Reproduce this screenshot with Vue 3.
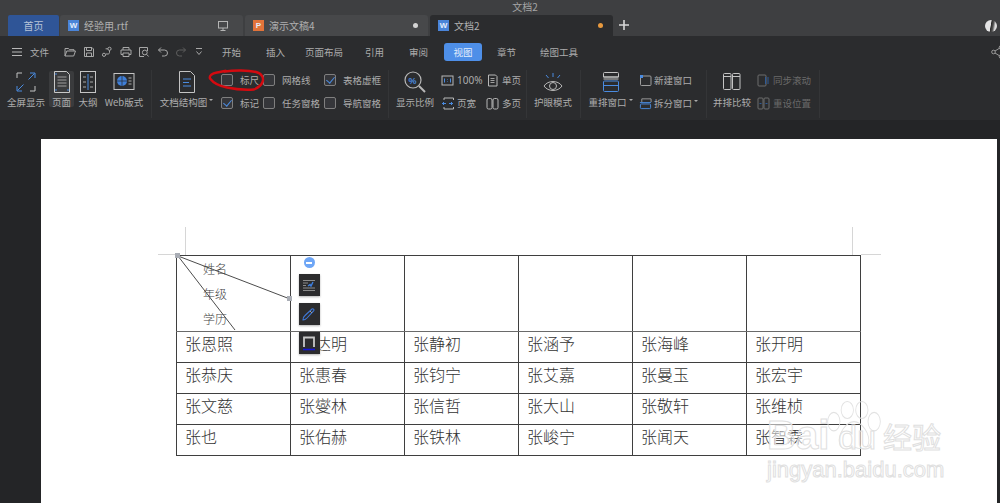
<script setup>
const tabs = [
  { name: '经验用.rtf', kind: 'w', trail: 'screen' },
  { name: '演示文稿4', kind: 'p', trail: 'dot' },
]
const menus = ['开始', '插入', '页面布局', '引用', '审阅', '视图', '章节', '绘图工具']
const rows = [
  ['张恩照', '张达明', '张静初', '张涵予', '张海峰', '张开明'],
  ['张恭庆', '张惠春', '张钧宁', '张艾嘉', '张曼玉', '张宏宇'],
  ['张文慈', '张燮林', '张信哲', '张大山', '张敬轩', '张维桢'],
  ['张也', '张佑赫', '张铁林', '张峻宁', '张闻天', '张智霖'],
]
</script>

<template>
  <div class="app">
    <div class="title">文档2</div>
    <div class="tabstrip">
      <div class="home">首页</div>
      <div v-for="t in tabs" :key="t.name" class="tab">
        <span class="fileicon" :class="t.kind">{{ t.kind === 'w' ? 'W' : 'P' }}</span>
        <span class="tabname">{{ t.name }}</span>
        <svg v-if="t.trail === 'screen'" class="trail" width="12" height="12" viewBox="0 0 12 12" fill="none" stroke="#b4b4b4"><rect x="1.5" y="1.5" width="9" height="6.5"/><path d="M6 8v2.5M3.5 10.5h5"/></svg>
        <i v-else class="dot white"></i>
      </div>
      <div class="tab active">
        <span class="fileicon w">W</span>
        <span class="tabname">文档2</span>
        <i class="dot orange"></i>
      </div>
      <svg class="plus" width="12" height="12" viewBox="0 0 12 12"><path d="M6 1v10M1 6h10" stroke="#d8d8d8" stroke-width="1.6"/></svg>
      <div class="avatar"></div>
    </div>

    <div class="menubar">
      <svg class="burger" width="12" height="10" viewBox="0 0 12 10"><path d="M1 1.5h10M1 5h10M1 8.5h10" stroke="#b8b8b8"/></svg>
      <span class="filemenu">文件</span>
      <div class="quick">
        <svg width="12" height="12" viewBox="0 0 12 12"><path d="M1 10V2.5h3.5l1 1.2H10V5M1 10l1.8-5H11.5L9.7 10Z"/></svg>
        <svg width="12" height="12" viewBox="0 0 12 12"><path d="M1.5 1.5h7.5l1.5 1.5v7.5h-9ZM3.5 1.5v3h5v-3M3.5 10.5V7h5v3.5"/></svg>
        <svg width="12" height="12" viewBox="0 0 12 12"><circle cx="3" cy="8.8" r="1.6"/><circle cx="8.5" cy="2.8" r="1.6"/><path d="M4.6 2.8h2.3M8.5 4.5v2c0 1-.7 1.5-1.5 1.5H5"/></svg>
        <svg width="12" height="12" viewBox="0 0 12 12"><path d="M3 4V1.5h6V4M3 8.5H1V4h10v4.5H9M3 7h6v3.5H3Z"/></svg>
        <svg width="12" height="12" viewBox="0 0 12 12"><path d="M9.5 5V1.5h-8v9H6"/><circle cx="6.8" cy="6.5" r="2.4"/><path d="M8.6 8.3l2 2.2"/></svg>
        <svg width="12" height="12" viewBox="0 0 12 12"><path d="M4 1.5L1.5 4 4 6.5M1.5 4H7.5a2.8 2.8 0 0 1 0 6H5"/></svg>
        <svg class="off" width="12" height="12" viewBox="0 0 12 12"><path d="M8 1.5L10.5 4 8 6.5M10.5 4H4.5a2.8 2.8 0 0 0 0 6H7"/></svg>
        <svg width="10" height="12" viewBox="0 0 10 12"><path d="M2 2.5h6M2.5 5.5l2.5 3 2.5-3"/></svg>
      </div>
      <nav class="menus">
        <span v-for="m in menus" :key="m" class="menu" :class="{ on: m === '视图' }">{{ m }}</span>
      </nav>
      <svg class="share" width="12" height="14" viewBox="0 0 12 14" fill="none" stroke="#9a9a9a"><circle cx="2.5" cy="7" r="1.8"/><circle cx="10" cy="2.5" r="1.8"/><circle cx="10" cy="11.5" r="1.8"/><path d="M4 6l4.5-2.800M4 8l4.5 2.800"/></svg>
    </div>

    <div class="ribbon">
      <section class="group g1">
        <div class="big w38">
          <svg width="24" height="24" viewBox="0 0 24 24" fill="none"><path d="M3 8V3h5M16 21h5v-5" stroke="#c4c4c4"/><path d="M21 8V3h-5M3 16v5h5M20.5 3.5l-6 6M3.5 20.5l6-6" stroke="#4a8be0"/></svg>
          <span>全屏显示</span>
        </div>
        <div class="big page">
          <svg width="22" height="24" viewBox="0 0 22 24" fill="none"><path d="M3.5 1.5h12l3 3v18h-15Z" stroke="#c8c8c8" fill="#3a3b3d"/><path d="M6.5 7h9M6.5 10h9M6.5 13h9M6.5 16h9" stroke="#9f9f9f"/><path d="M4 4h2M16 20h2M4 20h2" stroke="#4a8be0"/></svg>
          <span>页面</span>
        </div>
        <div class="big w28">
          <svg width="20" height="24" viewBox="0 0 20 24" fill="none"><rect x="2.5" y="1.5" width="15" height="21" stroke="#c4c4c4"/><path d="M10 4v16" stroke="#4a8be0"/><path d="M5 7h3M12 7h3M5 12h3M12 12h3M5 17h3M12 17h3" stroke="#a8a8a8"/></svg>
          <span>大纲</span>
        </div>
        <div class="big w38">
          <svg width="24" height="24" viewBox="0 0 24 24" fill="none"><rect x="2" y="3.5" width="20" height="16" stroke="#c4c4c4"/><circle cx="10" cy="11" r="5" fill="#3f7fd8"/><path d="M5 11h10M10 6v10" stroke="#25282c" stroke-width=".7"/><path d="M16.5 8h3M16.5 11h3M16.5 14h3" stroke="#a8a8a8"/></svg>
          <span>Web版式</span>
        </div>
      </section>

      <section class="group g2">
        <div class="big w53">
          <svg width="20" height="24" viewBox="0 0 20 24" fill="none"><path d="M2.5 1.5h11l4 4v17h-15Z" stroke="#c4c4c4"/><path d="M6 9h8M6 12.5h6M6 16h8" stroke="#4a8be0"/></svg>
          <span>文档结构图<i class="caret"></i></span>
        </div>
        <div class="checks">
          <label class="chk"><i class="box"></i><span>标尺</span></label>
          <label class="chk"><i class="box"></i><span>网格线</span></label>
          <label class="chk"><i class="box on"></i><span>表格虚框</span></label>
          <label class="chk"><i class="box on"></i><span>标记</span></label>
          <label class="chk"><i class="box"></i><span>任务窗格</span></label>
          <label class="chk"><i class="box"></i><span>导航窗格</span></label>
        </div>
      </section>

      <section class="group g3">
        <div class="big w38">
          <svg width="24" height="24" viewBox="0 0 24 24" fill="none"><circle cx="10" cy="10" r="8" stroke="#b8b8b8" stroke-width="1.2"/><path d="M16 16l6 6" stroke="#b8b8b8" stroke-width="2"/><text x="5.5" y="13.5" font-size="9" font-family="Liberation Sans" font-weight="700" fill="#4a8be0">%</text></svg>
          <span>显示比例</span>
        </div>
        <div class="pairs">
          <div class="small">
            <svg width="13" height="13" viewBox="0 0 13 13" fill="none"><rect x="1" y="2" width="11" height="9" stroke="#b8b8b8"/><path d="M3.5 4.5v4M9.5 4.5v4M6.5 5v.5M6.5 7.5v.5" stroke="#4a8be0"/></svg>
            <span class="t100">100%</span>
          </div>
          <div class="small">
            <svg width="13" height="13" viewBox="0 0 13 13" fill="none"><path d="M3 3V1h9.500v2M3 10v2h9.500v-2" stroke="#b8b8b8"/><path d="M1 6.5h4M8 6.5h4M3 5l-1.5 1.5L3 8M10 5l1.5 1.5L10 8" stroke="#4a8be0"/></svg>
            <span>页宽</span>
          </div>
          <div class="small">
            <svg width="13" height="13" viewBox="0 0 13 13" fill="none"><path d="M2.5 1h7l1.5 1.5V12h-8.500Z" stroke="#b8b8b8"/><path d="M4.5 4.5h4M4.5 6.5h4M4.5 8.5h4" stroke="#a0a0a0"/></svg>
            <span>单页</span>
          </div>
          <div class="small">
            <svg width="13" height="13" viewBox="0 0 13 13" fill="none"><rect x="1" y="1.5" width="5" height="10.5" rx="1.5" stroke="#b8b8b8"/><rect x="7" y="1.5" width="5" height="10.5" rx="1.5" stroke="#b8b8b8"/></svg>
            <span>多页</span>
          </div>
        </div>
      </section>

      <section class="group g4">
        <div class="big w38">
          <svg width="24" height="24" viewBox="0 0 24 24" fill="none"><path d="M3 16c4-6 14-6 18 0-4 6-14 6-18 0Z" stroke="#b8b8b8"/><circle cx="12" cy="16" r="3.5" stroke="#b8b8b8"/><path d="M12 3v4M5 5l2.5 3M19 5l-2.5 3" stroke="#4a8be0"/></svg>
          <span>护眼模式</span>
        </div>
      </section>

      <section class="group g5">
        <div class="big w45">
          <svg width="24" height="24" viewBox="0 0 24 24" fill="none"><path d="M4.5 7V3.5a1 1 0 0 1 1-1h13a1 1 0 0 1 1 1V7ZM4.5 7h15" stroke="#c4c4c4"/><rect x="4.5" y="11" width="15" height="10.5" rx="1" stroke="#4a8be0"/><path d="M4.5 15.5h15" stroke="#4a8be0"/><path d="M4.5 9h15" stroke="#c4c4c4"/></svg>
          <span>重排窗口<i class="caret"></i></span>
        </div>
        <div class="col">
          <div class="small">
            <svg width="13" height="13" viewBox="0 0 13 13" fill="none"><rect x="1.5" y="2" width="10.5" height="9.5" rx="1" stroke="#9e9e9e"/><rect x="1" y="1" width="3" height="3" fill="#4a8be0"/></svg>
            <span>新建窗口</span>
          </div>
          <div class="small">
            <svg width="13" height="13" viewBox="0 0 14 13" fill="none"><path d="M3 5V1.5h10V5" stroke="#9e9e9e"/><rect x="1.5" y="7" width="11" height="5" rx="1" stroke="#4a8be0"/><path d="M1 5.5h12" stroke="#4a8be0"/></svg>
            <span>拆分窗口<i class="caret"></i></span>
          </div>
        </div>
      </section>

      <section class="group g6">
        <div class="big w38">
          <svg width="20" height="24" viewBox="0 0 20 24" fill="none"><rect x="1.5" y="3.5" width="7.5" height="16" rx="1" stroke="#c4c4c4"/><rect x="10.5" y="3.5" width="7.5" height="16" rx="1" stroke="#c4c4c4"/><path d="M1.5 6.5h7.5M10.500 6.5h7.500" stroke="#c4c4c4"/></svg>
          <span>并排比较</span>
        </div>
        <div class="col dim">
          <div class="small">
            <svg width="13" height="13" viewBox="0 0 13 13" fill="none"><rect x="1" y="1" width="8" height="11" rx="1" stroke="#6d6d6d"/><path d="M8.5 3v7M11 3v7" stroke="#2f5b97"/></svg>
            <span>同步滚动</span>
          </div>
          <div class="small">
            <svg width="13" height="13" viewBox="0 0 13 13" fill="none"><rect x="1" y="1" width="5" height="11" rx="1" stroke="#6d6d6d"/><rect x="7" y="1" width="5" height="11" rx="1" stroke="#6d6d6d"/><path d="M2.5 6.5h2M8.5 6.5h2" stroke="#2f5b97"/></svg>
            <span>重设位置</span>
          </div>
        </div>
      </section>
    </div>

    <main class="workspace">
      <div class="paper">
        <div class="sheet">
          <i class="guide v left"></i>
          <i class="guide v right"></i>
          <i class="guide h hl"></i>
          <i class="guide h hr"></i>

          <table class="grid">
            <tbody>
              <tr class="head">
                <td class="slant">
                  <svg class="diag" width="116" height="76" viewBox="0 0 116 76"><path d="M1 0L113 43M1 0L58 74" stroke="#4c4c4c" fill="none"/></svg>
                  <i class="handle h1"></i>
                  <i class="handle h2"></i>
                  <span class="sl">姓名</span>
                  <span class="sl">年级</span>
                  <span class="sl">学历</span>
                </td>
                <td class="tools">
                  <div class="float">
                    <span class="minus"></span>
                    <span class="fbtn">
                      <svg width="14" height="14" viewBox="0 0 14 14" fill="none"><path d="M1 2.5h12M1 5h5M1 7.5h3M1 10h12M1 12.5h12" stroke="#8b8b8b"/><path d="M6 8l2-1.5 1 1.5 2-4" stroke="#3d7fe0" stroke-width="1.4"/></svg>
                    </span>
                    <span class="fbtn">
                      <svg width="16" height="16" viewBox="0 0 16 16" fill="none"><path d="M2 14c-.4-2 .8-3.500 2-4.500L11 3c1-.8 2.500.5 1.800 1.600L6 12c-1.200 1.300-2.500 2-4 2Z" stroke="#3f78d8" stroke-width="1.1"/><path d="M9 5l2 2" stroke="#9a9a9a"/></svg>
                    </span>
                    <span class="fbtn">
                      <svg width="16" height="16" viewBox="0 0 16 16" fill="none"><path d="M3 12V2.5h10V12" stroke="#c8c8c8" stroke-width="1.8"/><path d="M2 14.5h12" stroke="#1616d8" stroke-width="1.6"/></svg>
                    </span>
                  </div>
                </td>
                <td v-for="n in 4" :key="n"></td>
              </tr>
              <tr v-for="row in rows" :key="row[0]">
                <td v-for="c in row" :key="c">{{ c }}</td>
              </tr>
            </tbody>
          </table>

          <div class="watermark">
            <svg class="paw" width="56" height="54" viewBox="0 0 100 70" preserveAspectRatio="none" fill="none" stroke="#e2e2e2" stroke-width="1.5"><ellipse cx="14" cy="28" rx="11" ry="12"/><ellipse cx="38" cy="13" rx="11" ry="11"/><ellipse cx="64" cy="13" rx="11" ry="11"/><ellipse cx="86" cy="28" rx="11" ry="12"/><path d="M50 28c-14 0-29 16-26 28 2 9 16 8 26 5 10 3 24 4 26-5 3-12-12-28-26-28Z"/></svg>
            <div class="wm-top"><span class="wm-bai">Bai</span><span class="wm-du">du</span><span class="wm-cn">经验</span></div>
            <div class="wm-url">jingyan.baidu.com</div>
          </div>
        </div>
      </div>
    </main>

    <svg class="ring" width="62" height="26" viewBox="0 0 62 26" fill="none"><path d="M19 3.5C28 2 42 2 50 4c6 1.5 8 6 6.5 10-1 3-3 5-8.5 7.5-9 .5-18 0-27-2-8-1.500-14-5-17-9-1-3 2-5 7-6 3-.5 5-1 8-1.500Z" stroke="#d40a10" stroke-width="2.4"/></svg>
  </div>
</template>

<style scoped>
.app {
  position: relative;
  width: 1000px;
  height: 503px;
  overflow: hidden;
  background: #242527;
  font-family: "Noto Sans CJK SC", "Noto Sans", sans-serif;
  color: #adadad;
  font-size: 9.5px;
}
.title {
  height: 13px;
  line-height: 13px;
  background: #3e3f41;
  text-align: center;
  font-size: 10px;
  color: #a5a5a5;
  padding-left: 50px;
}
.tabstrip {
  height: 23px;
  background: #3e3f41;
  display: flex;
  align-items: flex-end;
  padding-left: 8px;
  gap: 1px;
}
.home {
  width: 51px;
  height: 21px;
  line-height: 21px;
  background: #2f5597;
  text-align: center;
  border-radius: 2px 2px 0 0;
  color: #b8c4d8;
  font-size: 10px;
}
.tab {
  width: 183px;
  height: 21px;
  background: #47484a;
  display: flex;
  align-items: center;
  padding: 0 10px 0 8px;
  box-sizing: border-box;
  border-radius: 3px 3px 0 0;
  margin-right: 1px;
  font-size: 10px;
}
.tab.active { background: #2b2c2e; }
.fileicon {
  width: 11px;
  height: 11px;
  font: 700 8px/11px "Liberation Sans", sans-serif;
  text-align: center;
  color: #e4edfb;
  margin-right: 5px;
  flex: none;
}
.fileicon.w { background: #4a84d8; }
.fileicon.p { background: #e2733a; }
.tabname { flex: 1; color: #b0b0b0; }
.dot { width: 5px; height: 5px; border-radius: 50%; }
.dot.white { background: #d4d4d4; }
.dot.orange { background: #e8993e; }
.trail { margin-right: 4px; }
.plus { margin: 0 0 5px 3px; }
.avatar {
  width: 12px;
  height: 12px;
  border-radius: 50%;
  margin: 0 3px 4px auto;
  background: linear-gradient(100deg, #e4e4e4 45%, #2a2a2a 50%, #555 65%, #ddd 80%);
}
.menubar {
  height: 32px;
  background: #2b2c2e;
  display: flex;
  align-items: center;
  padding-left: 11px;
  position: relative;
}
.filemenu { margin-left: 7px; width: 22px; }
.quick { display: flex; gap: 6.5px; margin-left: 12px; align-items: center; width: 158px; }
.quick svg { fill: none; stroke: #a8a8a8; flex: none; }
.quick svg.off { stroke: #5e5e5e; }
.menus { display: flex; align-items: center; }
.menu { height: 18px; line-height: 18px; white-space: nowrap; border-radius: 3px; }
.menu:nth-child(2) { margin-left: 25px; }
.menu:nth-child(3) { margin-left: 20px; }
.menu:nth-child(4) { margin-left: 22px; }
.menu:nth-child(5) { margin-left: 25px; }
.menu:nth-child(6) { margin-left: 16px; }
.menu:nth-child(7) { margin-left: 15px; }
.menu:nth-child(8) { margin-left: 24px; }
.menu.on { background: #4e8fe8; color: #e4eefc; padding: 0 9.5px; }
.share { position: absolute; right: -3px; top: 9px; }
.ribbon {
  height: 52px;
  background: #2b2c2e;
  display: flex;
  align-items: flex-start;
  padding-left: 7px;
}
.group {
  display: flex;
  align-items: stretch;
  gap: 4px;
  border-right: 1px solid #343537;
  padding-right: 8px;
  margin: 2px 7px 0 0;
  height: 48px;
}
.big {
  display: flex;
  flex-direction: column;
  align-items: center;
  flex: none;
  white-space: nowrap;
  gap: 1px;
}
.big svg { height: 24px; flex: none; }
.big span { line-height: 14px; }
.w38 { width: 38px; }
.w28 { width: 24px; margin: 0 1px 0 -2px; }
.w45 { width: 45px; }
.w53 { width: 53px; }
.page { width: 25px; background: #3a3b3d; border-radius: 2px; height: 36px; margin-top: 1px; }
.page svg { margin-top: -1px; }
.caret {
  display: inline-block;
  width: 0;
  height: 0;
  border: 2px solid transparent;
  border-top: 2.5px solid #aaa;
  margin-left: 2px;
  vertical-align: 3px;
}
.g1 { margin-right: 8px; }
.checks {
  display: grid;
  grid-template-columns: 42px 61px auto;
  align-content: start;
  row-gap: 8px;
  padding: 2px 0 0 4px;
}
.g2 { padding-right: 7px; }
.chk { display: flex; align-items: center; gap: 7px; height: 15px; white-space: nowrap; }
.box { width: 12px; height: 12px; box-sizing: border-box; border: 1px solid #7f7f7f; border-radius: 2px; background: #35363a; flex: none; position: relative; }
.box.on::after {
  content: "";
  position: absolute;
  left: 3px;
  top: 0;
  width: 4px;
  height: 7px;
  border: solid #4a8be0;
  border-width: 0 1px 1px 0;
  transform: rotate(40deg);
}
.pairs {
  display: grid;
  grid-template-columns: 45px 36px;
  grid-auto-flow: column;
  grid-template-rows: 23px 23px;
  margin-left: 3px;
}
.g3 { padding-right: 4px; }
.col { display: grid; grid-template-rows: 23px 23px; margin-left: 2px; }
.small { display: flex; align-items: center; gap: 3px; white-space: nowrap; height: 20px; }
.g5 .small { gap: 2px; }
.small svg { flex: none; }
.t100 { font-family: "Noto Sans", sans-serif; font-size: 10px; }
.dim { color: #6a6a6a; }
.g5 { margin-right: 6px; }
.g6 { margin-right: 0; }
.workspace {
  height: 383px;
  background: #242527;
  padding-top: 19px;
  box-sizing: border-box;
}
.paper {
  margin-left: 41px;
  width: 956px;
  height: 400px;
  background: #fff;
}
.sheet { position: relative; padding: 116px 0 0 135px; }
.guide { position: absolute; background: #d6d6d6; }
.guide.v { width: 1px; height: 28px; top: 88px; }
.guide.left { left: 144px; }
.guide.right { left: 811px; }
.guide.h { height: 1px; width: 20px; top: 115px; }
.guide.hl { left: 117px; width: 18px; }
.guide.hr { left: 820px; }
.grid {
  border-collapse: collapse;
  table-layout: fixed;
  width: 685px;
  font-family: "Noto Sans CJK SC", serif;
  font-weight: 300;
  color: #333;
  font-size: 16px;
}
.grid td {
  border: 1px solid #3f3f3f;
  height: 31px;
  padding: 0 0 8px 8px;
  box-sizing: border-box;
  vertical-align: middle;
  line-height: 20px;
  width: 114px;
}
.grid .head td { height: 76px; position: relative; border-bottom-color: #6a6a6a; }
.grid td.slant {
  padding: 0;
  font-size: 12px;
  color: #444;
  vertical-align: top;
}
.diag { position: absolute; left: 0; top: 0; }
.handle { position: absolute; width: 5px; height: 5px; background: #a9adb5; z-index: 2; }
.h1 { left: -2px; top: -3px; }
.h2 { left: 110px; top: 40px; }
.sl { display: block; position: relative; margin-left: 26px; height: 25px; line-height: 25px; }
.float {
  position: absolute;
  left: 7px;
  top: 0;
  width: 22px;
  display: flex;
  flex-direction: column;
  align-items: center;
  gap: 7px;
  z-index: 2;
}
.minus {
  position: relative;
  width: 11px;
  height: 11px;
  border-radius: 50%;
  background: #6ea6f6;
  margin: 1px 0 -1px;
}
.minus::after {
  content: "";
  position: absolute;
  left: 2.5px;
  top: 4.5px;
  width: 6px;
  height: 2px;
  background: #fff;
}
.fbtn {
  width: 21px;
  height: 22px;
  background: #2c2c2e;
  display: flex;
  align-items: center;
  justify-content: center;
  box-shadow: 0 1px 2px rgba(0,0,0,.3);
  flex: none;
}
.watermark {
  position: absolute;
  left: 726px;
  top: 283px;
  width: 190px;
  height: 80px;
  pointer-events: none;
}
.paw { position: absolute; left: 59px; top: -22px; }
.wm-top { position: absolute; left: 0; top: -9px; display: flex; align-items: baseline; white-space: nowrap; }
.wm-bai, .wm-du, .wm-cn, .wm-url {
  color: rgba(255,255,255,.55);
  -webkit-text-stroke: 1px #e0e0e0;
  font-family: "Liberation Sans", sans-serif;
}
.wm-bai { font-size: 40px; font-weight: 700; }
.wm-du { font-size: 34px; margin-left: 9px; }
.wm-cn { font-size: 29px; margin-left: 7px; font-family: "Noto Sans CJK SC", sans-serif; }
.wm-url { position: absolute; left: 0; top: 35px; font-size: 22px; white-space: nowrap; }
.ring { position: absolute; left: 206px; top: 68px; }
</style>
